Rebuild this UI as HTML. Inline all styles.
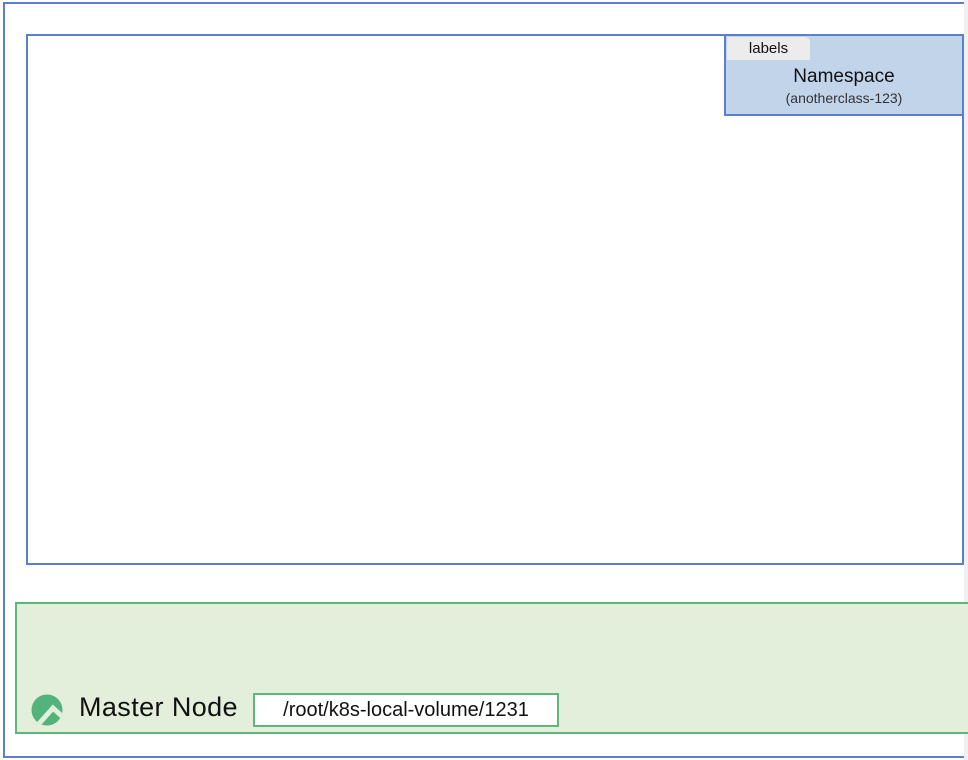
<!DOCTYPE html>
<html><head><style>
body{margin:0;width:968px;height:760px;background:#fff;position:relative;overflow:hidden;font-family:"Liberation Sans","Noto Sans CJK KR",sans-serif}
div{box-sizing:border-box;position:absolute}
</style></head><body>
<div style="left:3px;top:2px;width:980px;height:756px;border:2px solid #5b7fd0"></div>
<div style="left:964px;top:0;width:4px;height:760px;background:#f0f0f0"></div>
<div style="left:26px;top:34px;width:938px;height:531px;border:2px solid #5a7fcc;background:#fff"></div>
<div style="left:724px;top:34px;width:240px;height:82px;border:2px solid #5a7fcc;background:#c2d4ea"></div>
<div style="left:727px;top:37px;width:83px;height:23px;background:#ececec;border-radius:0 5px 0 0;font-size:15px;line-height:23px;text-align:center;color:#111">labels</div>
<div style="left:724px;top:66px;width:240px;text-align:center;font-size:19px;color:#111">Namespace</div>
<div style="left:724px;top:90px;width:240px;text-align:center;font-size:14px;color:#333">(anotherclass-123)</div>
<div style="left:15px;top:602px;width:960px;height:132px;border:2px solid #5cb87a;background:#e3efdb"></div>
<svg style="position:absolute;left:31px;top:694px" width="32" height="32" viewBox="0 0 32 32">
<defs><clipPath id="c"><circle cx="16" cy="16" r="15.5"/></clipPath></defs>
<circle cx="16" cy="16" r="15.5" fill="#52b37d"/>
<polyline points="5,33 22,14 34,25" fill="none" stroke="#e3efdb" stroke-width="5" clip-path="url(#c)"/>
</svg>
<div style="left:79px;top:692px;font-size:27px;letter-spacing:0.4px;color:#111">Master Node</div>
<div style="left:253px;top:693px;width:306px;height:34px;border:2px solid #5cb87a;background:#fff;text-align:center;font-size:20px;line-height:30px;color:#111">/root/k8s-local-volume/1231</div>
</body></html>
